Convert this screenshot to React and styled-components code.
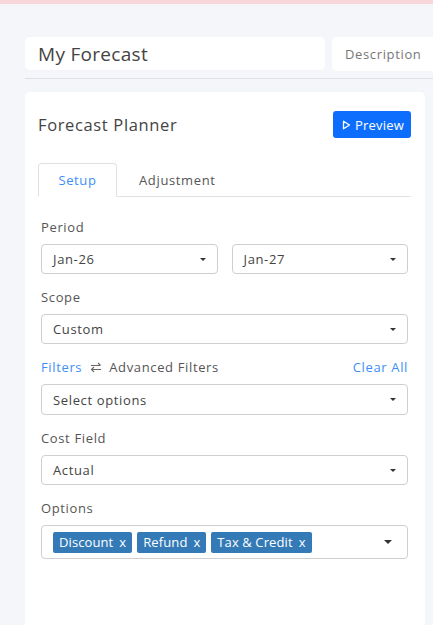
import styled, { createGlobalStyle } from "styled-components";

const GlobalStyle = createGlobalStyle`
  body {
    margin: 0;
    background: #f5f6fa;
    font-family: "Open Sans", "Liberation Sans", sans-serif;
    letter-spacing: 0.04em;
    color: #444;
  }
  * { box-sizing: border-box; }
`;

const Page = styled.div`
  width: 433px;
  height: 625px;
  overflow: hidden;
  border-top: 4px solid #f9d6d9;
`;

const Header = styled.div`
  display: flex;
  gap: 7px;
  margin: 33px 0 0 25px;
  padding-bottom: 7px;
  border-bottom: 1px solid #dde0e6;
`;

const NameInput = styled.div`
  flex: 0 0 300px;
  height: 33px;
  background: #fff;
  border-radius: 5px;
  padding-left: 13px;
  display: flex;
  align-items: center;
  font-size: 19px;
  letter-spacing: 0.3px;
  color: #444;
`;

const DescInput = styled.div`
  flex: 1 0 120px;
  height: 34px;
  background: #fff;
  border-radius: 5px;
  padding-left: 13px;
  display: flex;
  align-items: center;
  font-size: 13px;
  color: #777;
`;

const Card = styled.div`
  width: 400px;
  margin: 13px 0 0 25px;
  height: 560px;
  background: #fff;
  border-radius: 5px;
  padding: 19px 14px 0 13px;
`;

const CardHead = styled.div`
  display: flex;
  justify-content: space-between;
  align-items: center;
`;

const CardTitle = styled.div`
  font-size: 16.5px;
  color: #444;
`;

const PreviewButton = styled.button`
  display: flex;
  align-items: center;
  gap: 4px;
  height: 27px;
  padding: 0 7px 0 9px;
  border: none;
  border-radius: 3px;
  background: #0d6efd;
  color: #fff;
  font-family: inherit;
  letter-spacing: 0.2px;
  font-size: 13px;
`;

const Tabs = styled.div`
  display: flex;
  margin-top: 25px;
  border-bottom: 1px solid #dee2e6;
`;

const Tab = styled.div`
  width: ${(p) => (p.$active ? "79px" : "auto")};
  height: 34px;
  margin-bottom: -1px;
  padding: ${(p) => (p.$active ? "0" : "0 0 0 21px")};
  display: flex;
  align-items: center;
  justify-content: center;
  font-size: 13px;
  color: ${(p) => (p.$active ? "#3d8ff5" : "#555")};
  background: ${(p) => (p.$active ? "#fff" : "transparent")};
  border: 1px solid ${(p) => (p.$active ? "#dee2e6" : "transparent")};
  border-bottom-color: ${(p) => (p.$active ? "#fff" : "transparent")};
  border-radius: 4px 4px 0 0;
`;

const Form = styled.div`
  padding: 22px 3px 0;
  display: flex;
  flex-direction: column;
`;

const Label = styled.div`
  font-size: 13px;
  line-height: 16px;
  color: #555;
  margin: ${(p) => (p.$first ? "0" : "15px")} 0 9px;
`;

const FilterRow = styled.div`
  display: flex;
  align-items: center;
  font-size: 13px;
  line-height: 16px;
  margin: 15px 0 9px;
  color: #555;
`;

const LinkText = styled.span`
  color: #3d8ff5;
`;

const Spacer = styled.span`
  flex: 1;
`;

const SwapIcon = styled.svg`
  margin: 0 7px 0 8px;
`;

const Row = styled.div`
  display: flex;
  gap: 14px;
`;

const Select = styled.div`
  flex: ${(p) => (p.$grow ? "1 1 0" : "none")};
  height: ${(p) => p.$h || 30}px;
  border: 1px solid #cfcfcf;
  border-radius: 4px;
  padding: 0 9px 0 11px;
  display: flex;
  align-items: center;
  gap: 5px;
  font-size: 13px;
  color: #444;
`;

const Caret = styled.span`
  margin-left: auto;
  width: 0;
  height: 0;
  border-left: ${(p) => (p.$big ? 4 : 3)}px solid transparent;
  border-right: ${(p) => (p.$big ? 4 : 3)}px solid transparent;
  border-top: ${(p) => (p.$big ? 4 : 3)}px solid #333;
  margin-right: ${(p) => (p.$big ? 6 : 2)}px;
`;

const Tag = styled.span`
  display: inline-flex;
  align-items: center;
  gap: 6px;
  height: 21px;
  padding: 0 6px;
  background: #337ab7;
  border-radius: 2px;
  color: #fff;
  font-size: 13px;
  letter-spacing: 0.1px;
`;

const SelectField = ({ value, h, grow }) => (
  <Select $h={h} $grow={grow}>
    {value}
    <Caret />
  </Select>
);

export default function App() {
  return (
    <Page>
      <GlobalStyle />
      <Header>
        <NameInput>My Forecast</NameInput>
        <DescInput>Description</DescInput>
      </Header>
      <Card>
        <CardHead>
          <CardTitle>Forecast Planner</CardTitle>
          <PreviewButton>
            <svg width="9" height="10" viewBox="0 0 9 10">
              <path d="M1.5 1.2 L7.5 5 L1.5 8.8 Z" fill="none" stroke="#fff" strokeWidth="1.3" strokeLinejoin="round" />
            </svg>
            Preview
          </PreviewButton>
        </CardHead>
        <Tabs>
          <Tab $active>Setup</Tab>
          <Tab>Adjustment</Tab>
        </Tabs>
        <Form>
          <Label $first>Period</Label>
          <Row>
            <SelectField value="Jan-26" grow />
            <SelectField value="Jan-27" grow />
          </Row>
          <Label>Scope</Label>
          <SelectField value="Custom" />
          <FilterRow>
            <LinkText>Filters</LinkText>
            <SwapIcon width="12" height="11" viewBox="0 0 12 11">
              <path d="M1 3.5 H10.5 M8 1 L10.5 3.5 M11 7.5 H1.5 M4 5 L1.5 7.5 L4 10" fill="none" stroke="#666" strokeWidth="1.1" />
            </SwapIcon>
            Advanced Filters
            <Spacer />
            <LinkText>Clear All</LinkText>
          </FilterRow>
          <SelectField value="Select options" h={31} />
          <Label>Cost Field</Label>
          <SelectField value="Actual" />
          <Label>Options</Label>
          <Select $h={34}>
            <Tag>Discount <span>x</span></Tag>
            <Tag>Refund <span>x</span></Tag>
            <Tag>Tax &amp; Credit <span>x</span></Tag>
            <Caret $big />
          </Select>
        </Form>
      </Card>
    </Page>
  );
}
